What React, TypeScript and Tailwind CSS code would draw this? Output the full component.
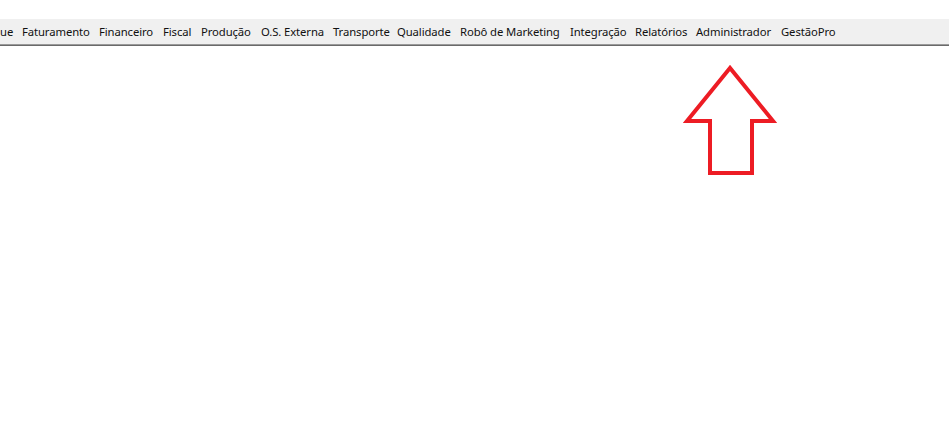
// Menu entries with the slot width each one takes in the bar
const menuItems = [
  { label: "ue", w: "w-[22px]" },
  { label: "Faturamento", w: "w-[77px]" },
  { label: "Financeiro", w: "w-[64px]" },
  { label: "Fiscal", w: "w-[38px]" },
  { label: "Produção", w: "w-[60px]" },
  { label: "O.S. Externa", w: "w-[72px]" },
  { label: "Transporte", w: "w-[64px]" },
  { label: "Qualidade", w: "w-[63px]" },
  { label: "Robô de Marketing", w: "w-[110px]" },
  { label: "Integração", w: "w-[65px]" },
  { label: "Relatórios", w: "w-[61px]" },
  { label: "Administrador", w: "w-[85px]" },
  { label: "GestãoPro", w: "w-[60px]" },
];

export default function App() {
  return (
    <div className="relative w-[951px] h-[427px] bg-white overflow-hidden font-['Segoe_UI','Noto_Sans',sans-serif]">
      {/* Menu bar */}
      <div className="pt-[19px] pr-[2px]">
        <div className="h-[25px] bg-[#f0f0f0] flex items-center text-[11.3px] tracking-[-0.1px] text-[#111] leading-none whitespace-nowrap">
          {menuItems.map((item) => (
            <span key={item.label} className={`${item.w} shrink-0`}>
              {item.label}
            </span>
          ))}
        </div>
        <div className="h-px bg-[#9a9a9a]" />
        <div className="h-px bg-[#6a6a6a]" />
      </div>

      {/* Red arrow annotation */}
      <svg
        className="absolute left-0 top-0"
        width="951"
        height="427"
        viewBox="0 0 951 427"
      >
        <polygon
          points="730,68 687,121 710,121 710,173 752,173 752,121 773,121"
          fill="none"
          stroke="#ed1c24"
          strokeWidth="4"
          strokeLinejoin="miter"
        />
      </svg>
    </div>
  );
}
